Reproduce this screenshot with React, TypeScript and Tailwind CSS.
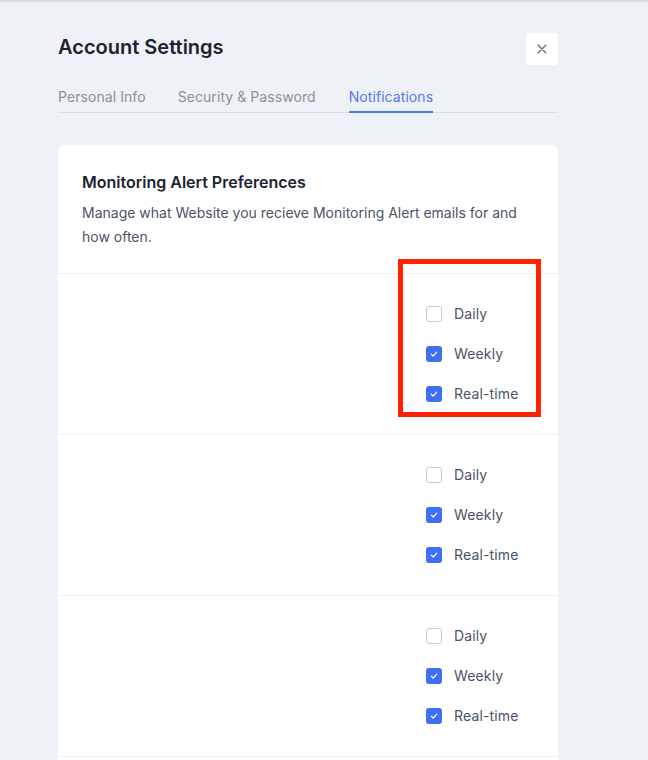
import React from "react";

const font = { fontFamily: "Inter, 'Noto Sans', sans-serif" };

function Check({ checked, label }: { checked: boolean; label: string }) {
  return (
    <div className="flex h-6 items-center gap-3">
      {checked ? (
        <span className="flex h-4 w-4 items-center justify-center rounded-[3px] bg-[#3e6ff4]">
          <svg width="10" height="10" viewBox="0 0 10 10" fill="none">
            <path d="M2.3 5.2 L4.2 7 L7.8 3.2" stroke="white" strokeWidth="1.2" strokeLinecap="round" strokeLinejoin="round" />
          </svg>
        </span>
      ) : (
        <span className="h-4 w-4 rounded-[3px] border border-[#c5cbd5] bg-white" />
      )}
      <span className="text-sm tracking-[0.01em] text-[#4b5366]">{label}</span>
    </div>
  );
}

function Row({ first }: { first?: boolean }) {
  return (
    <div className="relative flex justify-end border-t border-[#eef0f4] py-7 pr-6">
      <div className="flex w-[108px] flex-col gap-4">
        <Check checked={false} label="Daily" />
        <Check checked label="Weekly" />
        <Check checked label="Real-time" />
      </div>
      {first && (
        <div className="pointer-events-none absolute left-[340px] top-[-15px] h-[158px] w-[143px] border-[5px] border-[#ff2100]" />
      )}
    </div>
  );
}

export default function App() {
  return (
    <div style={font} className="h-[760px] w-[648px] overflow-hidden border-t-2 border-[#d9dce1] bg-[#eef1f5]">
      <div className="px-[58px] pt-[32px] pr-[90px]">
        <div className="flex items-start justify-between">
          <h1 className="mt-[1px] text-[20px] font-semibold leading-6 text-[#1c2230]">Account Settings</h1>
          <button className="-mt-px flex h-8 w-8 items-center justify-center rounded-[3px] bg-white">
            <svg width="10" height="10" viewBox="0 0 10 10" fill="none">
              <path d="M1 1 L9 9 M9 1 L1 9" stroke="#5c6474" strokeWidth="1.1" strokeLinecap="round" />
            </svg>
          </button>
        </div>
        <div className="mt-[22px] flex border-b border-[#d9dde4] text-sm tracking-[0.005em]">
          <span className="pb-[5px] text-[#8a909c]">Personal Info</span>
          <span className="ml-8 pb-[5px] text-[#8a909c]">Security &amp; Password</span>
          <span className="-mb-px ml-[33px] border-b-2 border-[#4d79f0] pb-[3px] text-[#5676f6]">Notifications</span>
        </div>
        <div className="mt-8 rounded-md bg-white">
          <div className="px-6 pt-[25px] pb-6">
            <h2 className="text-[16px] font-semibold leading-[24px] text-[#1c2230]">Monitoring Alert Preferences</h2>
            <p className="mt-[7px] text-sm leading-6 text-[#4b5366]">
              Manage what Website you recieve Monitoring Alert emails for and how often.
            </p>
          </div>
          <Row first />
          <Row />
          <Row />
          <div className="h-10 border-t border-[#eef0f4]" />
        </div>
      </div>
    </div>
  );
}
